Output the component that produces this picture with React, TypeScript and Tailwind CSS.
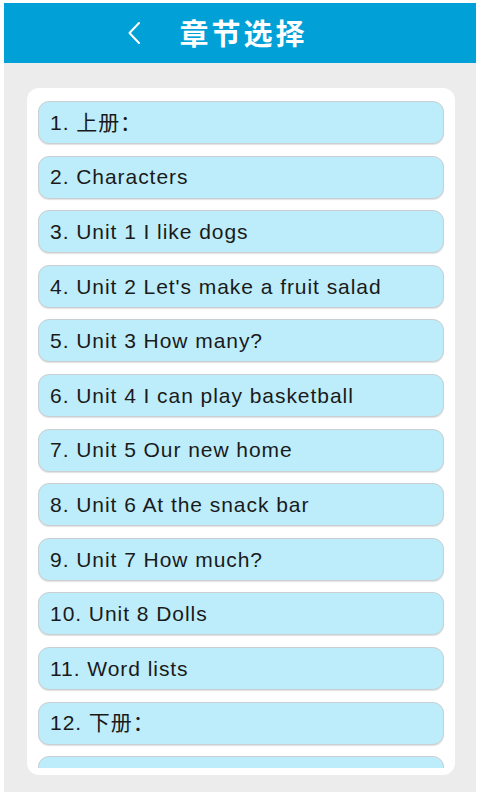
import React from "react";

const items = [
  "1. 上册：",
  "2. Characters",
  "3. Unit 1 I like dogs",
  "4. Unit 2 Let's make a fruit salad",
  "5. Unit 3 How many?",
  "6. Unit 4 I can play basketball",
  "7. Unit 5 Our new home",
  "8. Unit 6 At the snack bar",
  "9. Unit 7 How much?",
  "10. Unit 8 Dolls",
  "11. Word lists",
  "12. 下册：",
  "",
];

export default function App() {
  return (
    <div
      className="w-[479px] h-[800px] bg-white overflow-hidden"
      style={{ fontFamily: '"Liberation Sans", "Noto Sans CJK SC", sans-serif' }}
    >
      <div className="ml-[4px] mr-[3px] mt-[3px] h-[789px] bg-[#ececec] flex flex-col">
        <div className="h-[60px] bg-[#01a0d6] flex items-center justify-center gap-[37px] pr-[46px]">
          <svg width="16" height="24" viewBox="0 0 16 24" fill="none">
            <path d="M13 2 L3.5 12 L13 22" stroke="white" strokeWidth="2" strokeLinecap="round" strokeLinejoin="round" />
          </svg>
          <span className="text-white text-[29px] font-bold tracking-[3px]" style={{ fontFamily: '"Noto Sans CJK SC", sans-serif' }}>章节选择</span>
        </div>
        <div className="mt-[25px] ml-[23px] mr-[21px] h-[687px] bg-white rounded-[12px] pt-[13px] pb-[7px] px-[11px]">
          <div className="h-full overflow-hidden flex flex-col gap-[11.6px]">
            {items.map((t, i) => (
              <div
                key={i}
                className="shrink-0 h-[43px] rounded-[11px] bg-[#bdedfb] border-[1.5px] border-[#c9cfd2] shadow-[0_1px_1px_rgba(0,0,0,0.12)] flex items-center pl-[11px] text-[21px] tracking-[0.95px] text-[#1a1a1a]"
              >
                {t}
              </div>
            ))}
          </div>
        </div>
      </div>
    </div>
  );
}
